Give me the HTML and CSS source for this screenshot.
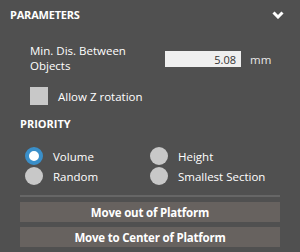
FILE: index.html
```html
<!DOCTYPE html>
<html lang="en">
  <head>
    <meta charset="UTF-8" />
    <title>Parameters</title>
    <link rel="stylesheet" href="styles.css">
  </head>
  <body>
    <div class="panel">
      <div class="panel-header">
        <span class="panel-title">PARAMETERS</span>
        <svg class="chevron" width="12" height="8" viewBox="0 0 12 8">
          <polyline points="1.5,1.5 6,6 10.5,1.5" fill="none" stroke="#fff" stroke-width="3" stroke-linejoin="miter" />
        </svg>
      </div>

      <div class="field">
        <label class="field-label" for="minDist">Min. Dis. Between Objects</label>
        <input class="field-input" id="minDist" type="text" value="5.08" />
        <span class="field-unit">mm</span>
      </div>

      <label class="check-row">
        <span class="check-box"></span>
        <span>Allow Z rotation</span>
      </label>

      <div class="section-title">PRIORITY</div>

      <div class="radio-grid">
        <div class="radio-item"><span class="radio checked"></span>Volume</div>
        <div class="radio-item"><span class="radio"></span>Height</div>
        <div class="radio-item"><span class="radio"></span>Random</div>
        <div class="radio-item"><span class="radio"></span>Smallest Section</div>
      </div>

      <div class="separator"></div>

      <div class="actions">
        <button class="action-btn">Move out of Platform</button>
        <button class="action-btn">Move to Center of Platform</button>
      </div>
    </div>
  </body>
</html>
```

FILE: styles.css
```css
:root {
  --bg: #505050;
  --text: #ffffff;
  --control: #c8c8c8;
  --input-bg: #efefef;
  --accent: #3a8fc9;
  --button: #67625f;
  --line: #666666;
}

* {
  margin: 0;
  padding: 0;
  box-sizing: border-box;
  font-family: "Open Sans", sans-serif;
}

html,
body {
  width: 300px;
  height: 252px;
  background-color: var(--bg);
  overflow: hidden;
}

body {
  color: var(--text);
  font-size: 11.5px;
  -webkit-font-smoothing: antialiased;
}

.panel {
  padding-top: 4px;
}

.panel-header {
  display: flex;
  justify-content: space-between;
  align-items: center;
  height: 20px;
  padding: 0 16px 0 10px;
}

.panel-title {
  font-weight: 700;
  font-size: 11px;
  letter-spacing: -0.2px;
}

.chevron {
  display: block;
  margin-top: 2px;
}

.field {
  display: flex;
  align-items: center;
  margin-top: 19px;
  padding-left: 30px;
}

.field-label {
  width: 135px;
  line-height: 15px;
  padding-right: 30px;
}

.field-input {
  width: 76px;
  height: 16px;
  border: none;
  background-color: var(--input-bg);
  color: #333;
  font-size: 11px;
  text-align: right;
  padding: 0 5px;
  margin-top: 2px;
  outline: none;
}

.field-unit {
  margin-left: 9px;
  margin-top: 3px;
  color: #e8e8e8;
}

.check-row {
  display: flex;
  align-items: center;
  gap: 10px;
  margin-top: 14px;
  padding-left: 30px;
}

.check-box {
  width: 18px;
  height: 18px;
  background-color: var(--control);
}

.section-title {
  margin-top: 11px;
  padding-left: 20px;
  font-weight: 700;
  font-size: 11px;
  line-height: 15px;
}

.radio-grid {
  display: grid;
  grid-template-columns: 125px 1fr;
  row-gap: 2px;
  margin-top: 16px;
  padding-left: 25px;
}

.radio-item {
  display: flex;
  align-items: center;
  gap: 10px;
  height: 18px;
}

.radio {
  width: 18px;
  height: 18px;
  border-radius: 50%;
  background-color: var(--control);
}

.radio.checked {
  background-color: #fff;
  border: 4px solid var(--accent);
}

.separator {
  height: 2px;
  margin: 10px 20px 0;
  background-color: var(--line);
}

.actions {
  display: flex;
  flex-direction: column;
  gap: 5px;
  margin: 5px 20px 0;
}

.action-btn {
  height: 20px;
  border: none;
  background-color: var(--button);
  color: var(--text);
  font-weight: 700;
  font-size: 11.5px;
  letter-spacing: -0.2px;
  cursor: pointer;
}
```
